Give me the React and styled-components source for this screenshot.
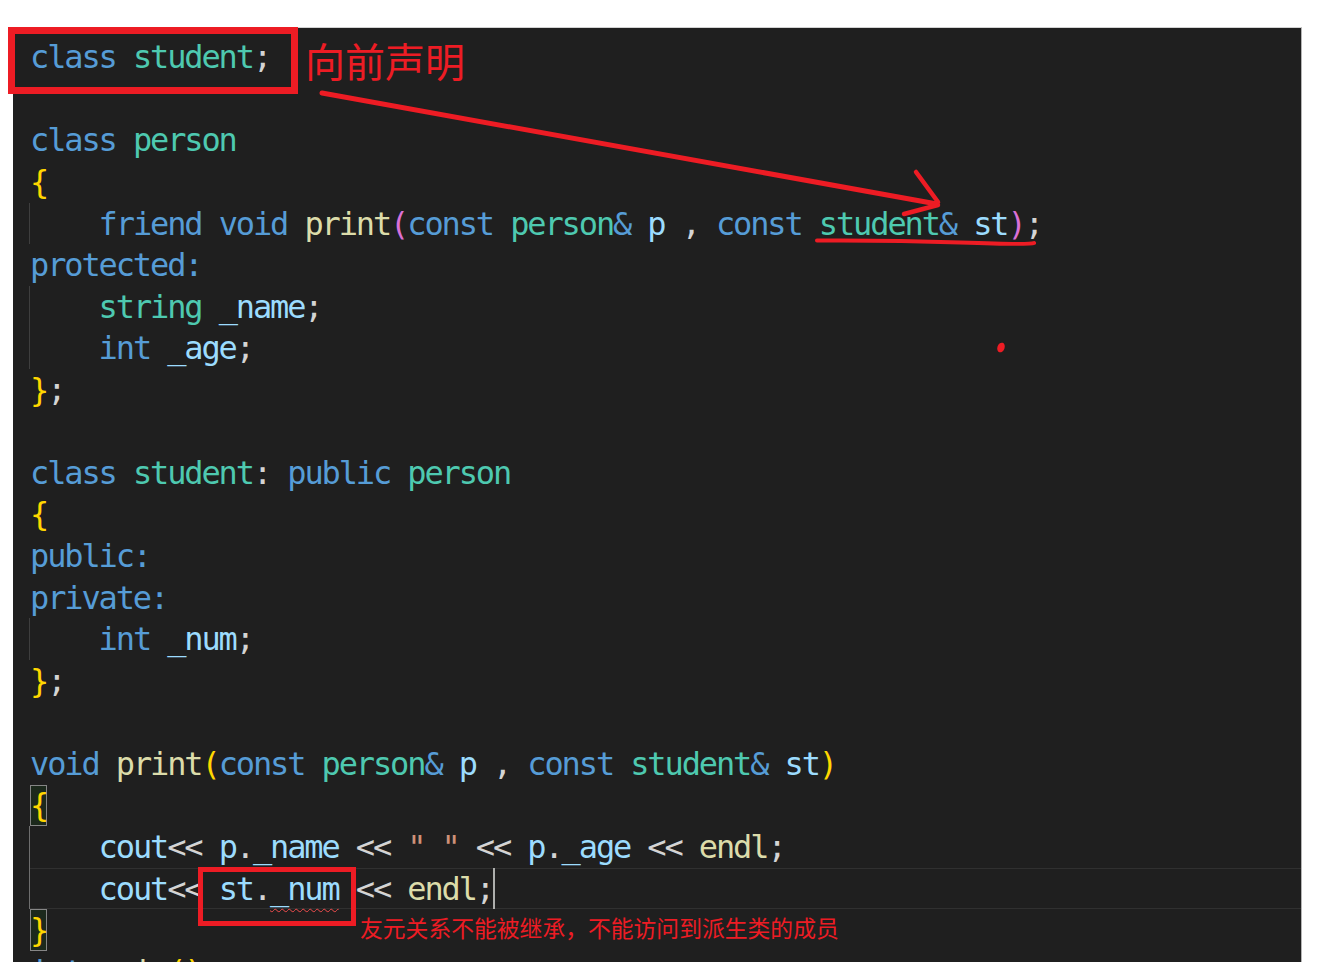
import React from "react";
import styled, { createGlobalStyle, css } from "styled-components";

const palette = {
  kw: "#569cd6",
  ty: "#4ec9b0",
  fn: "#dcdcaa",
  va: "#9cdcfe",
  pu: "#d4d4d4",
  b1: "#ffd700",
  b2: "#da70d6",
  st: "#ce9178",
};

const GlobalStyle = createGlobalStyle`
  html, body {
    margin: 0;
    padding: 0;
    background: #ffffff;
  }
`;

const Page = styled.div`
  position: relative;
  width: 1318px;
  height: 980px;
  padding-top: 27px;
  box-sizing: border-box;
  overflow: hidden;
`;

const Editor = styled.section`
  margin-left: 13px;
  width: 1289px;
  height: 935px;
  box-sizing: border-box;
  padding: 8.5px 0 0 17px;
  background: #1f1f1f;
  border-top: 1px solid #d2d2d2;
  border-right: 1px solid #b4b4b4;
  overflow: hidden;
  font-family: "DejaVu Sans Mono", monospace;
  font-size: 32px;
  letter-spacing: -2.12px;
  color: #d4d4d4;
`;

const Line = styled.div`
  display: flex;
  align-items: center;
  height: 41.57px;
  white-space: pre;
  ${p =>
    p.$current &&
    css`
      box-shadow: inset 0 1px 0 #303030, inset 0 -1px 0 #303030;
    `}
`;

// indent guide: four spaces wide, drawn as a left rule
const Guide = styled.span`
  flex: none;
  align-self: stretch;
  display: block;
  white-space: pre;
  border-left: 1px solid ${p => (p.$active ? "#6e6e6e" : "#3e3e3e")};
  margin-left: -1px;
`;

const Match = styled.span`
  align-self: stretch;
  display: flex;
  align-items: center;
  background: #1c291c;
  box-shadow: inset 0 0 0 1px #868686;
  color: #ffd700;
`;

const Tok = styled.span`
  color: ${p => palette[p.$k] || "#d4d4d4"};
  ${p =>
    p.$err &&
    css`
      text-decoration: underline wavy #f14c4c;
      text-decoration-thickness: 1px;
      text-underline-offset: 8px;
      text-decoration-skip-ink: none;
    `}
`;

const Caret = styled.span`
  align-self: stretch;
  width: 2px;
  background: #aeafad;
`;

const Callout = styled.div`
  position: absolute;
  left: ${p => p.$x}px;
  top: ${p => p.$y}px;
  width: ${p => p.$w}px;
  height: ${p => p.$h}px;
  box-sizing: border-box;
  border: ${p => p.$b}px solid #ed1c24;
  pointer-events: none;
`;

const Note = styled.div`
  position: absolute;
  left: ${p => p.$x}px;
  top: ${p => p.$y}px;
  font-family: "Noto Sans CJK SC", sans-serif;
  font-size: ${p => p.$size}px;
  line-height: 1;
  color: #ed1c24;
  white-space: nowrap;
`;

const Ink = styled.svg`
  position: absolute;
  left: 0;
  top: 0;
  width: 1318px;
  height: 980px;
  pointer-events: none;
`;

const code = [
  { t: [["class", "kw"], [" "], ["student", "ty"], [";", "pu"]] },
  { t: [] },
  { t: [["class", "kw"], [" "], ["person", "ty"]] },
  { t: [["{", "b1"]] },
  {
    guide: 1,
    t: [
      ["friend", "kw"], [" "], ["void", "kw"], [" "], ["print", "fn"], ["(", "b2"],
      ["const", "kw"], [" "], ["person", "ty"], ["&", "kw"], [" "], ["p", "va"],
      [" , "], ["const", "kw"], [" "], ["student", "ty"], ["&", "kw"], [" "],
      ["st", "va"], [")", "b2"], [";", "pu"],
    ],
  },
  { t: [["protected:", "kw"]] },
  { guide: 1, t: [["string", "ty"], [" "], ["_name", "va"], [";"]] },
  { guide: 1, t: [["int", "kw"], [" "], ["_age", "va"], [";"]] },
  { t: [["}", "b1"], [";"]] },
  { t: [] },
  {
    t: [
      ["class", "kw"], [" "], ["student", "ty"], [":"], [" "], ["public", "kw"],
      [" "], ["person", "ty"],
    ],
  },
  { t: [["{", "b1"]] },
  { t: [["public:", "kw"]] },
  { t: [["private:", "kw"]] },
  { guide: 1, t: [["int", "kw"], [" "], ["_num", "va"], [";"]] },
  { t: [["}", "b1"], [";"]] },
  { t: [] },
  {
    t: [
      ["void", "kw"], [" "], ["print", "fn"], ["(", "b1"], ["const", "kw"], [" "],
      ["person", "ty"], ["&", "kw"], [" "], ["p", "va"], [" , "], ["const", "kw"],
      [" "], ["student", "ty"], ["&", "kw"], [" "], ["st", "va"], [")", "b1"],
    ],
  },
  { match: "{" },
  {
    guide: 2,
    t: [
      ["cout", "va"], ["<< "], ["p", "va"], ["."], ["_name", "va"], [" << "],
      ['" "', "st"], [" << "], ["p", "va"], ["."], ["_age", "va"], [" << "],
      ["endl", "fn"], [";"],
    ],
  },
  {
    guide: 2,
    current: true,
    caret: true,
    t: [
      ["cout", "va"], ["<< "], ["st", "va"], ["."], ["_num", "va", true], [" << "],
      ["endl", "fn"], [";"],
    ],
  },
  { match: "}" },
  { t: [["int", "kw"], [" "], ["main", "fn"], ["()", "b1"]] },
];

const CodeLine = ({ line }) => (
  <Line $current={line.current}>
    {line.match && <Match>{line.match}</Match>}
    {line.guide && <Guide $active={line.guide === 2}>{"    "}</Guide>}
    {(line.t || []).map(([text, kind, err], i) => (
      <Tok key={i} $k={kind} $err={err}>
        {text}
      </Tok>
    ))}
    {line.caret && <Caret />}
  </Line>
);

export default function App() {
  return (
    <Page>
      <GlobalStyle />
      <Editor>
        {code.map((line, i) => (
          <CodeLine key={i} line={line} />
        ))}
      </Editor>

      <Callout $x={8} $y={27} $w={290} $h={67} $b={7} />
      <Note $x={305} $y={40} $size={40}>
        向前声明
      </Note>

      <Callout $x={198} $y={867} $w={158} $h={59} $b={5} />
      <Note $x={360} $y={917} $size={22.8}>
        友元关系不能被继承，不能访问到派生类的成员
      </Note>

      <Ink viewBox="0 0 1318 980">
        <g stroke="#ed1c24" fill="none" strokeLinecap="round" strokeLinejoin="round">
          <path d="M322 93 L937 204" strokeWidth="5" />
          <path d="M916 172 L938 202" strokeWidth="4.5" />
          <path d="M904 214 L938 205" strokeWidth="4.5" />
          <path d="M817 240.5 Q 890 240 960 242.5 T 1034 243" strokeWidth="4" />
        </g>
        <ellipse cx="1001" cy="347.5" rx="3.6" ry="5" fill="#ed1c24" transform="rotate(20 1001 347.5)" />
      </Ink>
    </Page>
  );
}
